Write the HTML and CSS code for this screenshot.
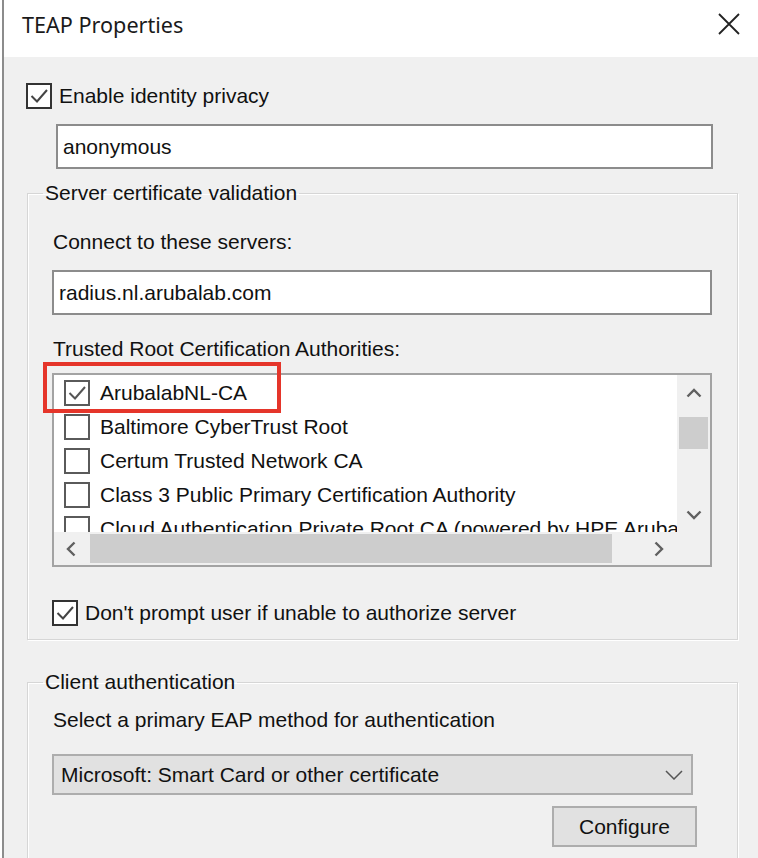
FILE: index.html
```html
<!DOCTYPE html>
<html lang="en">
<head>
    <meta charset="utf-8">
    <meta name="viewport" content="width=device-width, initial-scale=1.0">
    <link rel="stylesheet" href="styles.css">
</head>
<body>
    <div class="window">
        <div class="titlebar">
            <span class="title">TEAP Properties</span>
            <svg class="close" width="22" height="22" viewBox="0 0 22 22">
                <path d="M1 1 L21 21 M21 1 L1 21" stroke="#222" stroke-width="1.8" fill="none"/>
            </svg>
        </div>
        <div class="content">
            <div class="check first">
                <span class="box dark">
                    <svg viewBox="0 0 22 22"><path d="M3.5 11 L9 16.5 L19 5" stroke="#444" stroke-width="2" fill="none"/></svg>
                </span>
                <span>Enable identity privacy</span>
            </div>
            <div class="field indent">anonymous</div>

            <fieldset class="group server">
                <legend>Server certificate validation</legend>
                <div class="label connect">Connect to these servers:</div>
                <div class="field wide">radius.nl.arubalab.com</div>
                <div class="label trusted">Trusted Root Certification Authorities:</div>

                <div class="listwrap">
                    <div class="list">
                        <div class="items">
                            <div class="item">
                                <span class="box">
                                    <svg viewBox="0 0 22 22"><path d="M3.5 11 L9 16.5 L19 5" stroke="#555" stroke-width="2" fill="none"/></svg>
                                </span>
                                <span>ArubalabNL-CA</span>
                            </div>
                            <div class="item"><span class="box"></span><span>Baltimore CyberTrust Root</span></div>
                            <div class="item"><span class="box"></span><span>Certum Trusted Network CA</span></div>
                            <div class="item"><span class="box"></span><span>Class 3 Public Primary Certification Authority</span></div>
                            <div class="item"><span class="box"></span><span>Cloud Authentication Private Root CA (powered by HPE Aruba)</span></div>
                        </div>
                        <div class="vscroll">
                            <div class="sbtn up">
                                <svg width="16" height="10" viewBox="0 0 16 10"><path d="M1.5 8.5 L8 2 L14.5 8.5" stroke="#606060" stroke-width="2.4" fill="none"/></svg>
                            </div>
                            <div class="vthumb"></div>
                            <div class="spacer"></div>
                            <div class="sbtn down">
                                <svg width="16" height="10" viewBox="0 0 16 10"><path d="M1.5 1.5 L8 8 L14.5 1.5" stroke="#606060" stroke-width="2.4" fill="none"/></svg>
                            </div>
                        </div>
                        <div class="hscroll">
                            <div class="sbtn left">
                                <svg width="10" height="16" viewBox="0 0 10 16"><path d="M8.5 1.5 L2 8 L8.5 14.5" stroke="#606060" stroke-width="2.4" fill="none"/></svg>
                            </div>
                            <div class="hthumb"></div>
                            <div class="spacer"></div>
                            <div class="sbtn right">
                                <svg width="10" height="16" viewBox="0 0 10 16"><path d="M1.5 1.5 L8 8 L1.5 14.5" stroke="#606060" stroke-width="2.4" fill="none"/></svg>
                            </div>
                        </div>
                        <div class="corner"></div>
                    </div>
                    <div class="highlight"></div>
                </div>

                <div class="check prompt">
                    <span class="box dark">
                        <svg viewBox="0 0 22 22"><path d="M3.5 11 L9 16.5 L19 5" stroke="#444" stroke-width="2" fill="none"/></svg>
                    </span>
                    <span>Don't prompt user if unable to authorize server</span>
                </div>
            </fieldset>

            <fieldset class="group client">
                <legend>Client authentication</legend>
                <div class="label select">Select a primary EAP method for authentication</div>
                <div class="dropdown">
                    <span>Microsoft: Smart Card or other certificate</span>
                    <svg width="18" height="10" viewBox="0 0 18 10"><path d="M1 1 L9 9 L17 1" stroke="#555" stroke-width="1.5" fill="none"/></svg>
                </div>
                <div class="buttons">
                    <button type="button" class="configure">Configure</button>
                </div>
            </fieldset>
        </div>
    </div>
</body>
</html>
```

FILE: styles.css
```css
* {
    box-sizing: border-box;
}

body {
    margin: 0;
    background-color: #ffffff;
    font-family: "Liberation Sans", Arial, sans-serif;
    font-size: 21px;
    color: #111;
}

.window {
    margin-left: 2px;
    border-left: 2px solid #8c8c8c;
    height: 858px;
    overflow: hidden;
    background-color: #f0f0f0;
}

.titlebar {
    height: 57px;
    background-color: #ffffff;
    display: flex;
    justify-content: space-between;
    align-items: flex-start;
    padding: 0 18px 0 18px;
}

.title {
    font-family: "Noto Sans", "Open Sans", sans-serif;
    font-size: 21.6px;
    line-height: 28px;
    padding-top: 11px;
    color: #1a1a1a;
}

.close {
    margin-top: 13px;
}

.content {
    padding: 0 20px 0 22px;
}

/* checkboxes */
.check {
    display: flex;
    align-items: center;
    gap: 7px;
    line-height: 24px;
}

.check.first {
    margin-top: 26px;
}

.box {
    display: block;
    width: 26px;
    height: 26px;
    flex: none;
    border: 2px solid #5a5a5a;
    background-color: #ffffff;
}

.box.dark {
    border-color: #333;
}

.box svg {
    display: block;
    width: 22px;
    height: 22px;
}

/* text fields */
.field {
    height: 45px;
    border: 2px solid #8c8c8c;
    background-color: #ffffff;
    display: flex;
    align-items: center;
    padding-left: 5px;
}

.field.indent {
    margin: 15px 0 0 30px;
    width: 657px;
}

.field.wide {
    margin-top: 16px;
    width: 660px;
}

/* group boxes */
.group {
    margin: 12px 0 0 1px;
    width: 711px;
    padding: 0 25px 13px 24px;
    border: 1px solid #d6d6d6;
    box-shadow: inset 1px 1px 0 #ffffff, 1px 1px 0 #ffffff;
}

.group legend {
    margin-left: -9px;
    padding: 0 2px;
    line-height: 24px;
}

.group.client {
    margin-top: 30px;
    padding-bottom: 40px;
}

.label {
    line-height: 24px;
    margin-left: 1px;
}

.label.connect {
    margin-top: 25px;
}

.label.trusted {
    margin-top: 22px;
}

.label.select {
    margin-top: 14px;
}

/* certificate list */
.listwrap {
    position: relative;
    margin-top: 12px;
    width: 660px;
}

.list {
    height: 194px;
    border: 2px solid #a3a3a3;
    background-color: #ffffff;
    display: grid;
    grid-template-columns: 1fr 33px;
    grid-template-rows: 1fr 33px;
}

.items {
    overflow: hidden;
    padding-top: 1px;
}

.item {
    height: 34px;
    display: flex;
    align-items: center;
    gap: 10px;
    padding-left: 10px;
    white-space: nowrap;
}

.vscroll {
    display: flex;
    flex-direction: column;
    background-color: #f0f0f0;
}

.hscroll {
    display: flex;
    flex-direction: row;
    background-color: #f0f0f0;
}

.sbtn {
    display: flex;
    align-items: center;
    justify-content: center;
    flex: none;
}

.sbtn.up {
    height: 36px;
}

.sbtn.down {
    height: 35px;
}

.sbtn.left {
    width: 34px;
}

.sbtn.right {
    width: 37px;
}

.spacer {
    flex: 1;
}

.vthumb {
    margin: 6px 2px 0 2px;
    height: 32px;
    background-color: #cdcdcd;
}

.hthumb {
    margin: 2px 0 2px 2px;
    width: 522px;
    background-color: #cdcdcd;
}

.corner {
    background-color: #f0f0f0;
}

.highlight {
    position: absolute;
    left: -9px;
    top: -11px;
    width: 238px;
    height: 51px;
    border: 4px solid #e5352a;
}

.check.prompt {
    margin-top: 33px;
}

/* client auth */
.dropdown {
    margin-top: 22px;
    width: 641px;
    height: 41px;
    border: 2px solid #adadad;
    background-color: #e1e1e1;
    display: flex;
    align-items: center;
    justify-content: space-between;
    padding: 0 8px 0 7px;
}

.buttons {
    display: flex;
    justify-content: flex-end;
    margin-top: 11px;
    padding-right: 15px;
}

.configure {
    width: 145px;
    height: 41px;
    border: 2px solid #adadad;
    background-color: #e1e1e1;
    font-family: "Liberation Sans", Arial, sans-serif;
    font-size: 21px;
    color: #111;
    padding: 0;
}
```
